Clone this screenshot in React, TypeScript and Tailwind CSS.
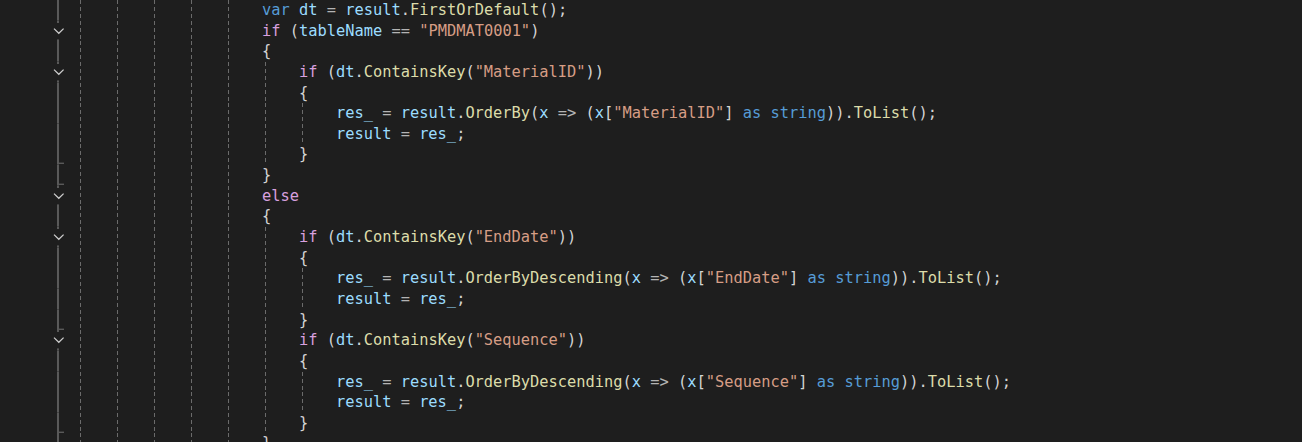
import React from "react";

type Fold = "line" | "chev" | "tick";

type Line = {
  indent: number;
  code: string;
  fold: Fold;
};

const lines: Line[] = [
  { indent: 20, code: "var dt = result.FirstOrDefault();", fold: "line" },
  { indent: 20, code: 'if (tableName == "PMDMAT0001")', fold: "chev" },
  { indent: 20, code: "{", fold: "line" },
  { indent: 24, code: 'if (dt.ContainsKey("MaterialID"))', fold: "chev" },
  { indent: 24, code: "{", fold: "line" },
  { indent: 28, code: 'res_ = result.OrderBy(x => (x["MaterialID"] as string)).ToList();', fold: "line" },
  { indent: 28, code: "result = res_;", fold: "line" },
  { indent: 24, code: "}", fold: "tick" },
  { indent: 20, code: "}", fold: "tick" },
  { indent: 20, code: "else", fold: "chev" },
  { indent: 20, code: "{", fold: "line" },
  { indent: 24, code: 'if (dt.ContainsKey("EndDate"))', fold: "chev" },
  { indent: 24, code: "{", fold: "line" },
  { indent: 28, code: 'res_ = result.OrderByDescending(x => (x["EndDate"] as string)).ToList();', fold: "line" },
  { indent: 28, code: "result = res_;", fold: "line" },
  { indent: 24, code: "}", fold: "tick" },
  { indent: 24, code: 'if (dt.ContainsKey("Sequence"))', fold: "chev" },
  { indent: 24, code: "{", fold: "line" },
  { indent: 28, code: 'res_ = result.OrderByDescending(x => (x["Sequence"] as string)).ToList();', fold: "line" },
  { indent: 28, code: "result = res_;", fold: "line" },
  { indent: 24, code: "}", fold: "tick" },
  { indent: 20, code: "}", fold: "line" },
];

const keywords = new Set(["var", "as", "string"]);
const control = new Set(["if", "else"]);
const methods = new Set(["FirstOrDefault", "ContainsKey", "OrderBy", "OrderByDescending", "ToList"]);

function tokenize(code: string) {
  const re = /("[^"]*")|([A-Za-z_][A-Za-z0-9_]*)|(=>|==|=)|(\s+)|(.)/g;
  const out: { text: string; cls: string }[] = [];
  let m: RegExpExecArray | null;
  while ((m = re.exec(code))) {
    if (m[1]) out.push({ text: m[1], cls: "text-[#d69d85]" });
    else if (m[2]) {
      const w = m[2];
      if (keywords.has(w)) out.push({ text: w, cls: "text-[#569cd6]" });
      else if (control.has(w)) out.push({ text: w, cls: "text-[#d8a0df]" });
      else if (methods.has(w)) out.push({ text: w, cls: "text-[#dcdcaa]" });
      else out.push({ text: w, cls: "text-[#9cdcfe]" });
    } else if (m[3]) out.push({ text: m[3], cls: "text-[#b4b4b4]" });
    else if (m[4]) out.push({ text: m[4], cls: "" });
    else out.push({ text: m[5], cls: "text-[#d4d4d4]" });
  }
  return out;
}

function FoldMark({ fold }: { fold: Fold }) {
  return (
    <svg width="77" height="20.65" viewBox="0 0 77 20.65" className="shrink-0 block">
      {fold === "chev" ? (
        <>
          <rect x="57" y="0" width="2" height="2" fill="#5a5a5a" />
          <rect x="57" y="18.4" width="2" height="2.25" fill="#5a5a5a" />
          <polyline
            points="54,7.6 58.8,12.3 63.6,7.6"
            fill="none"
            stroke="#cfcfcf"
            strokeWidth="1.2"
          />
        </>
      ) : (
        <rect x="57" y="0" width="2" height="20.65" fill="#5a5a5a" />
      )}
      {fold === "tick" && <rect x="57" y="18.6" width="7" height="1.4" fill="#5a5a5a" />}
    </svg>
  );
}

function CodeLine({ line }: { line: Line }) {
  const guides = Array.from({ length: line.indent / 4 });
  return (
    <div className="flex h-[20.65px] leading-[20.65px]">
      <FoldMark fold={line.fold} />
      <div className="flex">
        {guides.map((_, i) => (
          <span key={i} className="flex w-[4ch] h-full">
            <span className="ml-[3px] w-px h-full bg-[repeating-linear-gradient(to_bottom,#6b6b6b_0px,#6b6b6b_4px,transparent_4px,transparent_7px)]" />
          </span>
        ))}
      </div>
      <span className="whitespace-pre">
        {tokenize(line.code).map((t, i) => (
          <span key={i} className={t.cls}>
            {t.text}
          </span>
        ))}
      </span>
    </div>
  );
}

export default function App() {
  return (
    <div className="h-[442px] w-full overflow-hidden bg-[#1e1e1e] font-['DejaVu_Sans_Mono',monospace] text-[15.36px] text-[#d4d4d4]">
      {lines.map((line, i) => (
        <CodeLine key={i} line={line} />
      ))}
    </div>
  );
}
